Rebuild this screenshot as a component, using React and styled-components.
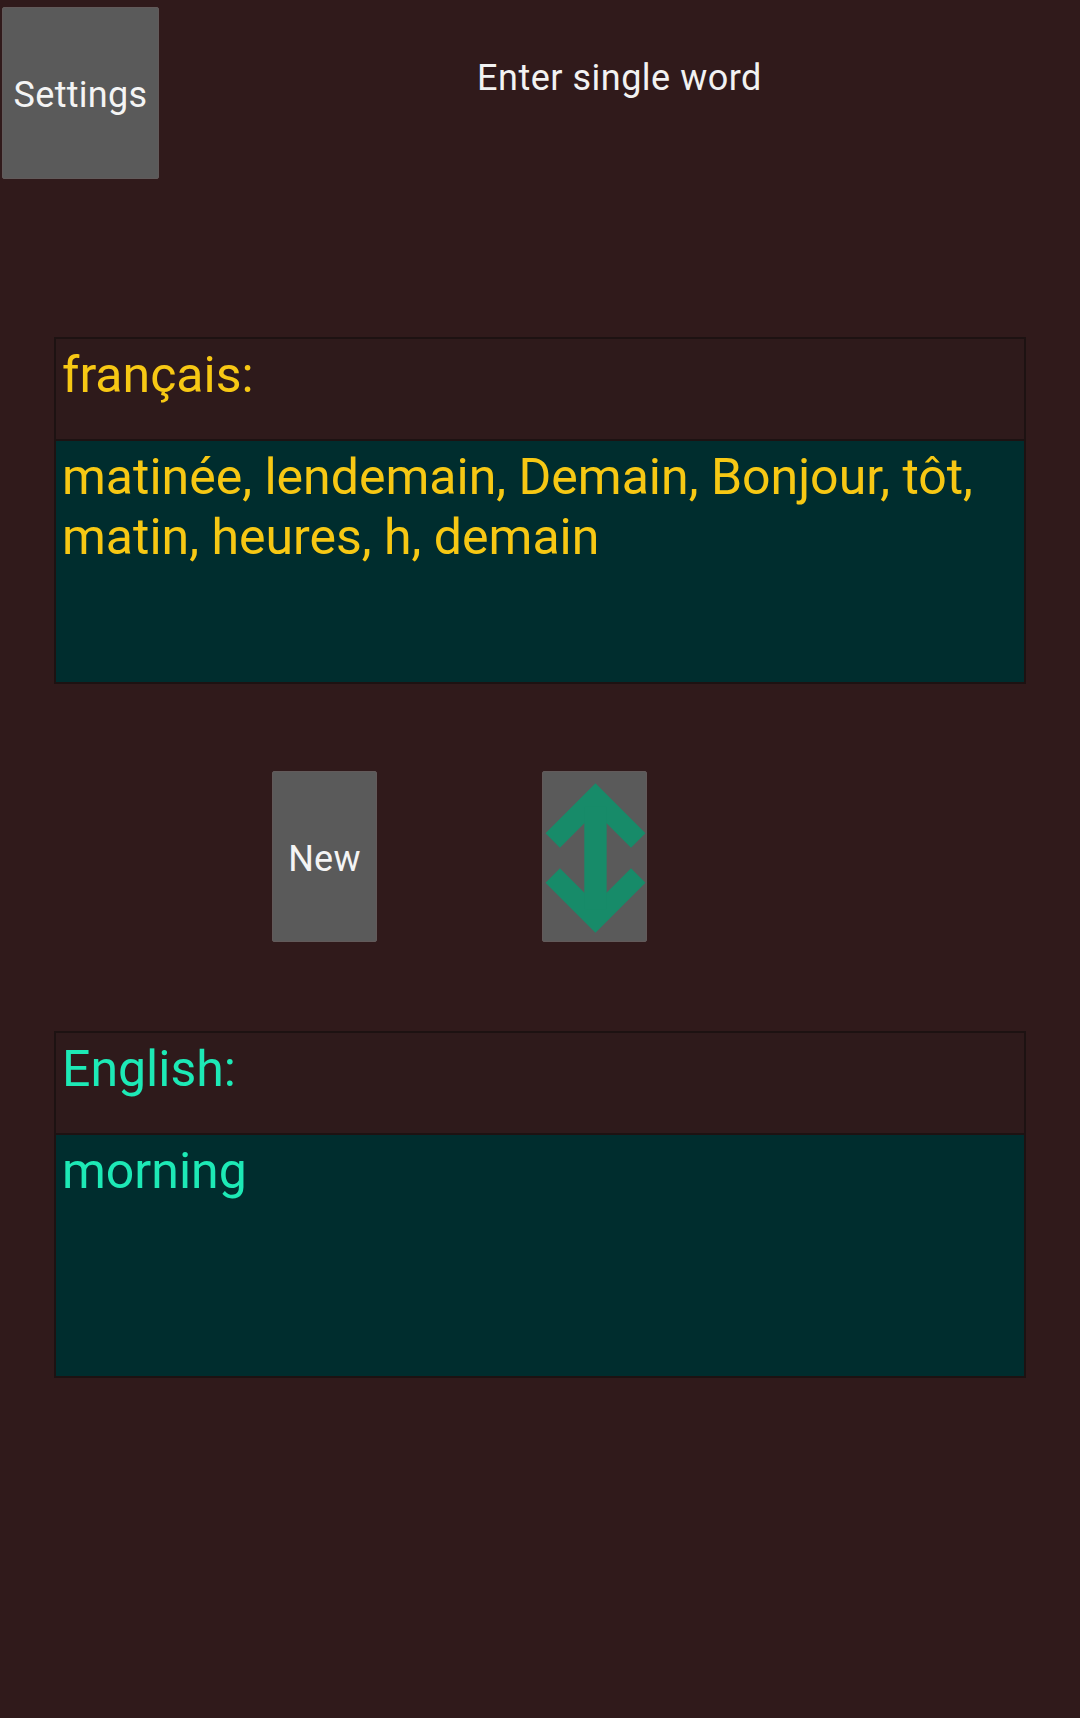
import React from 'react';
import styled, {createGlobalStyle} from 'styled-components';

const GlobalStyle = createGlobalStyle`
  html, body {
    margin: 0;
    padding: 0;
    background: #301a1b;
  }
  body {
    font-family: Roboto, "Noto Sans", "Liberation Sans", sans-serif;
    min-height: 1718px;
  }
`;

const Screen = styled.div`
  min-height: 1718px;
  background: #301a1b;
  display: flex;
  flex-direction: column;
`;

const TopBar = styled.div`
  display: flex;
  align-items: flex-start;
  padding: 7px 0 0 2px;
`;

const GrayButton = styled.button`
  width: ${p => p.$w}px;
  height: ${p => p.$h}px;
  background: #5a5a5a;
  border: 1px solid #625a5a;
  border-radius: 2px;
  color: #f4f4f4;
  font-family: Roboto, "Noto Sans", sans-serif;
  font-size: 36px;
  letter-spacing: 0.3px;
  padding: 4px 0 0;
  display: flex;
  align-items: center;
  justify-content: center;
  flex-shrink: 0;
`;

const Title = styled.div`
  flex: 1;
  text-align: center;
  color: #f2f2f2;
  font-size: 36px;
  letter-spacing: 0.5px;
  padding-top: 50px;
`;

const Panel = styled.section`
  margin: ${p => p.$top}px 54px 0;
  border: 2px solid #1d1212;
`;

const PanelHeader = styled.div`
  height: 94px;
  padding: 6px 6px 0;
  background: #2e1a1b;
  border-bottom: 2px solid #1d1212;
  color: ${p => p.$color};
  font-size: 50px;
  line-height: 60px;
`;

const PanelBody = styled.div`
  height: 235px;
  padding: 6px 6px 0;
  background: #002d2e;
  color: ${p => p.$color};
  font-size: 50px;
  line-height: 60px;
`;

const ButtonRow = styled.div`
  display: flex;
  gap: 165px;
  margin-top: 87px;
  padding-left: 272px;
`;

function SwapIcon() {
  return (
    <svg width="106" height="172" viewBox="0 0 106 172" style={{marginTop: -4}}>
      <g fill="none" stroke="#178b69" strokeWidth="21" strokeLinejoin="miter" strokeLinecap="butt">
        <path d="M10 69 L54 25 L98 69" />
        <path d="M10 105 L54 149 L98 105" />
        <path d="M54 34 L54 140" strokeWidth="23" />
      </g>
    </svg>
  );
}

export default function App() {
  return (
    <Screen>
      <GlobalStyle />
      <TopBar>
        <GrayButton $w={157} $h={172}>Settings</GrayButton>
        <Title>Enter single word</Title>
      </TopBar>

      <Panel $top={158}>
        <PanelHeader $color="#f7c814">français:</PanelHeader>
        <PanelBody $color="#f7c814">
          matinée, lendemain, Demain, Bonjour, tôt, matin, heures, h, demain
        </PanelBody>
      </Panel>

      <ButtonRow>
        <GrayButton $w={105} $h={171}>New</GrayButton>
        <GrayButton $w={105} $h={171}><SwapIcon /></GrayButton>
      </ButtonRow>

      <Panel $top={89}>
        <PanelHeader $color="#1de9b6">English:</PanelHeader>
        <PanelBody $color="#1de9b6">morning</PanelBody>
      </Panel>
    </Screen>
  );
}
